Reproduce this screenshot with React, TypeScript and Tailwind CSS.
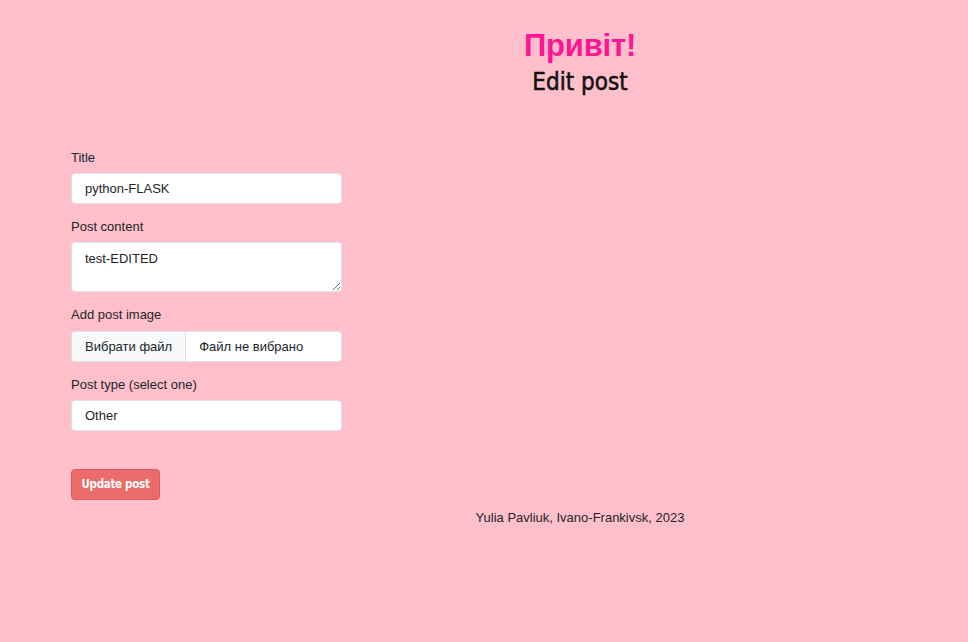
import React from "react";

const Field = ({ label, children }: { label: string; children: React.ReactNode }) => (
  <div className="flex flex-col">
    <label className="text-[13px] leading-[16px] text-[#212529] mb-[7px]">{label}</label>
    {children}
  </div>
);

const App = () => {
  return (
    <div className="min-h-[642px] bg-[#ffc0cb] text-[#212529] font-['Liberation_Sans',Arial,sans-serif]">
      <header className="ml-[192px] w-[776px] pt-[26px] flex flex-col items-center">
        <h1 className="text-[31px] leading-[40px] font-bold text-[#ff1493] tracking-[-0.2px]">Привіт!</h1>
        <h2 className="text-[24px] leading-[30px] text-[#111] mt-[1px] font-['DejaVu_Sans_Condensed',sans-serif] [-webkit-text-stroke:0.5px_#111]">
          Edit post
        </h2>
      </header>

      <form className="ml-[71px] w-[271px] mt-[53px] flex flex-col gap-[15px]">
        <Field label="Title">
          <input
            defaultValue="python-FLASK"
            className="h-[31px] rounded-[4px] border border-[#dee2e6] bg-white px-[13px] text-[13px] text-[#212529] outline-none font-['Liberation_Sans',Arial,sans-serif]"
          />
        </Field>
        <Field label="Post content">
          <textarea
            defaultValue="test-EDITED"
            className="h-[50px] rounded-[4px] border border-[#dee2e6] bg-white px-[13px] pt-[6px] text-[13px] text-[#212529] outline-none font-['Liberation_Sans',Arial,sans-serif]"
          />
        </Field>
        <Field label="Add post image">
          <div className="mt-[1px] flex h-[31px] rounded-[4px] border border-[#dee2e6] bg-white overflow-hidden text-[13px]">
            <span className="flex items-center px-[13px] bg-[#f8f9fa] border-r border-[#dee2e6]">Вибрати файл</span>
            <span className="flex items-center px-[13px]">Файл не вибрано</span>
          </div>
        </Field>
        <Field label="Post type (select one)">
          <div className="flex items-center h-[31px] rounded-[4px] border border-[#dee2e6] bg-white px-[13px] text-[13px]">
            Other
          </div>
        </Field>
        <div className="mt-[23px]">
          <button
            type="button"
            className="h-[31px] w-[89px] rounded-[4px] border border-[#dd5c5c] bg-[#ec6b6b] text-white text-[11.5px] font-bold tracking-[-0.3px] font-['DejaVu_Sans_Condensed',sans-serif]"
          >
            Update post
          </button>
        </div>
      </form>

      <footer className="ml-[192px] w-[776px] mt-[10px] text-center text-[13px] leading-[16px] text-[#212529]">
        Yulia Pavliuk, Ivano-Frankivsk, 2023
      </footer>
    </div>
  );
};

export default App;
